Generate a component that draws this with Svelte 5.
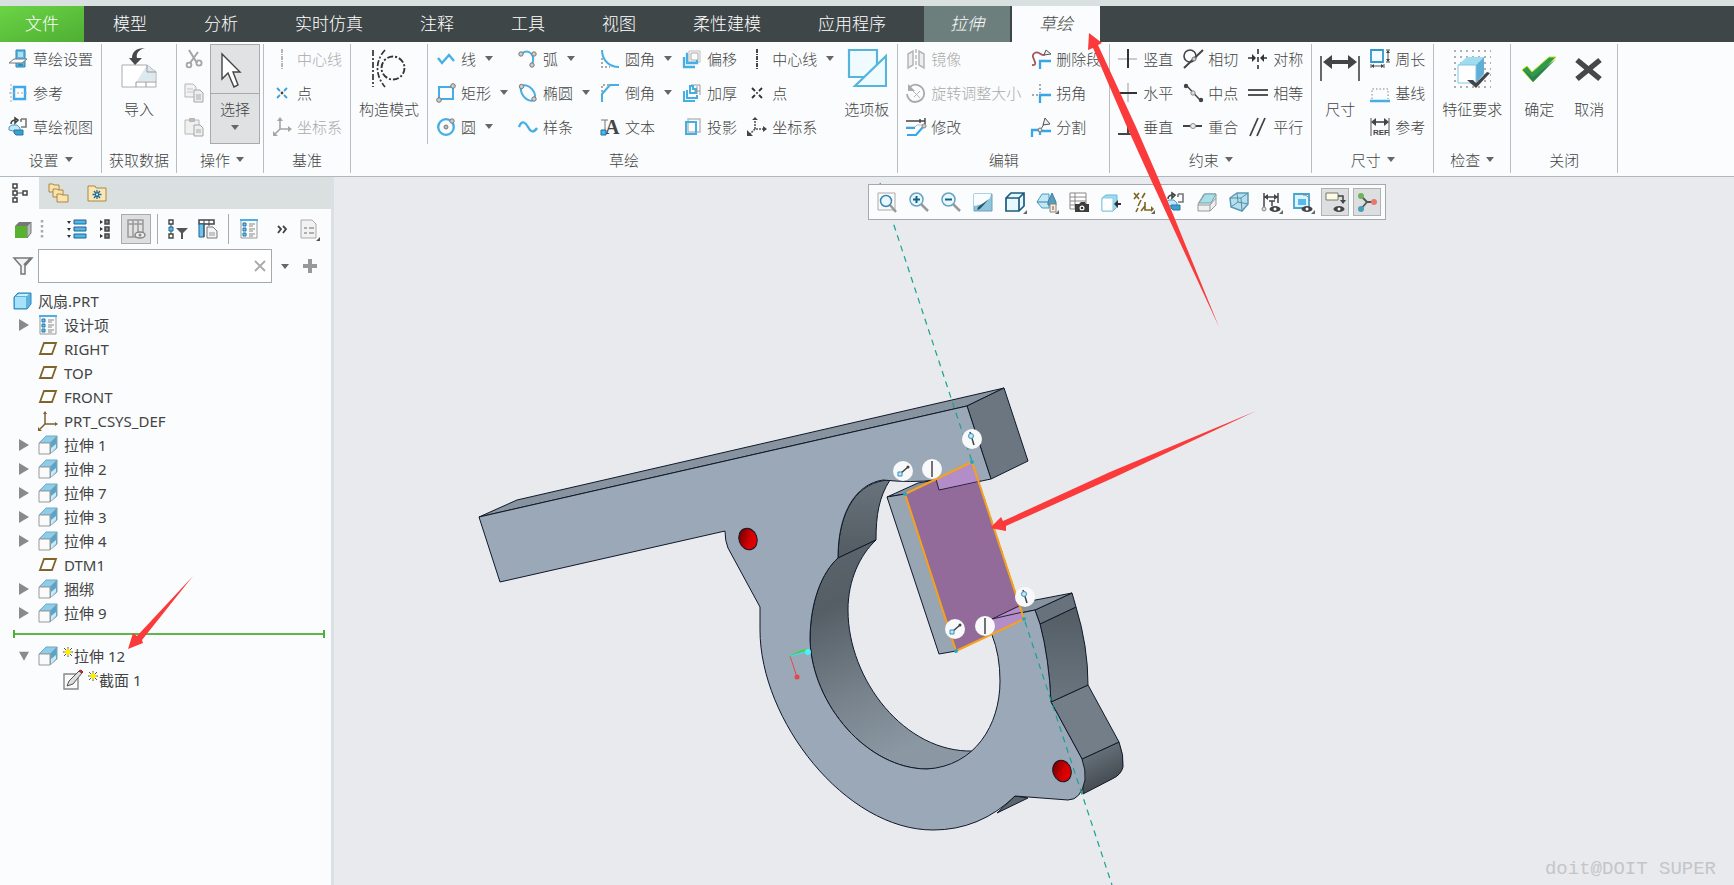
<script>
  let filterText = "";

  const tabs = [
    "模型",
    "分析",
    "实时仿真",
    "注释",
    "工具",
    "视图",
    "柔性建模",
    "应用程序",
  ];

  // inner svg markup, 20x20 unless drawn with bigIcon (40x40)
  const icons = {
    setup: `<path d="M8 1h9v17H8z" fill="#5fb6de" stroke="#2f83b0"/><path d="M10 3h5v5h-5z" fill="#a9e2f7"/><path d="M1 14l5-4h13l-5 4z" fill="#fff" stroke="#777"/><path d="M10 15h5v2h-5z" fill="#2c8fc4"/>`,
    refs: `<path d="M6 4h11v12H6z" fill="none" stroke="#3fa9ea" stroke-width="2.4"/><path d="M3 1v18M1 10h18" stroke="#aaa" stroke-dasharray="2 2" fill="none"/>`,
    view: `<path d="M3 7c0-3 2-4 5-4M7 1l3 2-3 3z" fill="none" stroke="#444" stroke-width="1.6"/><path d="M13 2h5v8h-5M13 2v3" fill="none" stroke="#777" stroke-width="1.6"/><path d="M1 10l3-2h5l3 3v3H5l-4-1z" fill="#bfe9fa" stroke="#4b9cc4"/><path d="M6 13h9v5H8l-2-2z" fill="#3b9fd0" stroke="#2579a5"/>`,
    import: `<path d="M3 17h25l9 7v15H3z" fill="#fff" stroke="#a9adb0"/><path d="M28 17l8 7v9H18z" fill="#dce9ef"/><path d="M28 17v7h9M17 39v-5h20M27 34v5" fill="none" stroke="#999"/><path d="M26 0C19 2 17 6 18 10h5l-7 7-6-7h3C13 4 17 0 26 0z" fill="#4a4a4a"/>`,
    cut: `<path d="M5 1l8 13M14 3L6 14" stroke="#a5a5a5" stroke-width="2" fill="none"/><circle cx="5" cy="16" r="2.4" fill="none" stroke="#a5a5a5" stroke-width="1.8"/><circle cx="15" cy="14" r="2.6" fill="none" stroke="#a5a5a5" stroke-width="1.8"/>`,
    copy: `<path d="M1 1h8l3 3v10H1z" fill="#f2f2f2" stroke="#b5b5b5"/><path d="M3 6h6M3 9h6" stroke="#c5c5c5"/><path d="M10 7h6l3 3v9h-9z" fill="#eee" stroke="#a5a5a5"/><path d="M12 12h5M12 14h5M12 16h5" stroke="#aaa"/>`,
    paste: `<path d="M1 3h14v14H1z" fill="#f0f0ee" stroke="#b8b8b8"/><path d="M5 1h6v4H5z" fill="#bbb"/><path d="M10 8h6l3 3v8h-9z" fill="#eee" stroke="#a5a5a5"/><path d="M12 13h5M12 15h5" stroke="#aaa"/>`,
    cursor: `<path d="M7 6v25l6-6 6 14 4-2-5-13h7z" fill="#fff" stroke="#444" stroke-width="1.4"/>`,
    axisOff: `<path d="M10 0v20" stroke="#b5b5b5" stroke-width="2" stroke-dasharray="4 1 1 1"/>`,
    pointBlue: `<path d="M5 5l3 3M15 5l-3 3M5 15l3-3M15 15l-3-3" stroke="#3fa0d8" stroke-width="1.8"/><circle cx="10" cy="10" r="1.4" fill="#444"/>`,
    csysOff: `<path d="M8 2v10h10M8 12l-6 6" stroke="#a5a5a5" stroke-width="1.6" fill="none"/><path d="M5 4l3-4 3 4zM16 9l4 3-4 3zM1 14v5h5z" fill="#a5a5a5"/>`,
    construct: `<path d="M4 2v37" stroke="#333" stroke-width="1.7" stroke-dasharray="6 2 2 2"/><path d="M16 2c-10 11-10 25 0 37" fill="none" stroke="#333" stroke-width="1.7" stroke-dasharray="6 2 2 2"/><circle cx="24" cy="20" r="11.500" fill="none" stroke="#333" stroke-width="1.9" stroke-dasharray="6 2 2 2"/>`,
    line: `<path d="M2 9l4 5 7-8 5 6" fill="none" stroke="#45aee4" stroke-width="2.3"/>`,
    rect: `<path d="M3 4h14v12H3z" fill="none" stroke="#45aee4" stroke-width="2"/><circle cx="17" cy="3" r="2.300" fill="#ccc" stroke="#777"/><circle cx="3" cy="17" r="2.300" fill="#ccc" stroke="#777"/>`,
    circle: `<circle cx="10" cy="10" r="7.800" fill="none" stroke="#45aee4" stroke-width="2.300"/><circle cx="10" cy="10" r="2" fill="#bbb" stroke="#777"/><circle cx="16" cy="4" r="2.200" fill="#ccc" stroke="#777"/>`,
    arc: `<path d="M3 5c7-6 15 0 11 11" fill="none" stroke="#45aee4" stroke-width="2"/><circle cx="3" cy="5" r="2.200" fill="#ccc" stroke="#777"/><circle cx="16" cy="5" r="2.200" fill="#ccc" stroke="#777"/><circle cx="14" cy="16" r="2.200" fill="#ccc" stroke="#777"/>`,
    ellipse: `<ellipse cx="10" cy="10" rx="9" ry="5.500" transform="rotate(50 10 10)" fill="none" stroke="#45aee4" stroke-width="2"/><circle cx="3.500" cy="3.500" r="2.200" fill="#ccc" stroke="#777"/><circle cx="16" cy="16" r="2.200" fill="#ccc" stroke="#777"/>`,
    spline: `<path d="M1 10c3-8 7-4 9 0s5 7 9 1" fill="none" stroke="#45aee4" stroke-width="2.300"/>`,
    fillet: `<path d="M2 1c0 10 7 17 17 17" fill="none" stroke="#45aee4" stroke-width="2"/><path d="M2 9v9h8" fill="none" stroke="#aaa" stroke-width="2" stroke-dasharray="2 2"/>`,
    chamfer: `<path d="M2 19v-8l8-9h9" fill="none" stroke="#45aee4" stroke-width="2"/><path d="M2 9V2h8" fill="none" stroke="#aaa" stroke-width="2" stroke-dasharray="2 2"/>`,
    text: `<path d="M1 3h7M5 3v10" stroke="#777" fill="none"/><text x="5" y="17" font-family="Liberation Serif, serif" font-weight="700" font-size="20" fill="#444">A</text><path d="M1 13h5v5H1z" fill="#49b8f0" stroke="#1a6ea0"/>`,
    offset: `<path d="M7 2h11v11H7z" fill="none" stroke="#bbb"/><path d="M9 4h7v7H9z" fill="none" stroke="#aaa"/><path d="M6 5H5v9h10v-3M2 8v10h11" fill="none" stroke="#45aee4" stroke-width="2.300"/>`,
    thicken: `<path d="M9 2h9v10" fill="none" stroke="#999"/><path d="M8 3h3v3h3v4H8zM5 7v8h10v-3M2 8v10h11" fill="none" stroke="#45aee4" stroke-width="2"/><path d="M15 3v8M12 8h6" stroke="#999"/>`,
    project: `<path d="M6 2h12v13H6z" fill="none" stroke="#bbb" stroke-width="1.500"/><path d="M4 5h10v12H4z" fill="none" stroke="#45aee4" stroke-width="2"/>`,
    axis: `<path d="M10 0v20" stroke="#333" stroke-width="1.800" stroke-dasharray="4 1 1 1"/>`,
    point: `<path d="M5 5l3 3M15 5l-3 3M5 15l3-3M15 15l-3-3" stroke="#333" stroke-width="1.800"/><circle cx="10" cy="10" r="1" fill="#333"/>`,
    csys: `<path d="M8 4v8h9M8 12l-5 5" stroke="#555" stroke-width="1.600" fill="none" stroke-dasharray="2 1"/><path d="M5 3l3-3 3 3zM16 9l4 3-4 3zM0 13v6h6z" fill="#444"/>`,
    palette: `<path d="M2 2h28v27H2z" fill="#f0fbff" stroke="#55b5dd" stroke-width="2.200"/><path d="M39 8v30H8z" fill="#f0fbff" stroke="#55b5dd" stroke-width="2.200"/>`,
    mirror: `<path d="M2 5l5-3v14l-5 3zM18 5l-5-3v14l5 3z" fill="#eee" stroke="#b5b5b5" stroke-width="1.500"/><path d="M10 0v20" stroke="#999" stroke-dasharray="4 2"/>`,
    rotate: `<path d="M4 4c5-5 13-1 14 5s-4 10-9 10-8-5-8-8" fill="none" stroke="#aaa" stroke-width="1.800"/><path d="M2 1v7h7z" fill="#aaa"/><path d="M7 8l7 7M14 8l-6 6" stroke="#b5b5b5"/>`,
    modify: `<path d="M0 4h19M19 1v6M14 2v4" stroke="#444" stroke-width="1.400" fill="none"/><path d="M0 10h9l2-2h7" stroke="#bbb" fill="none"/><path d="M0 11h9M1 18h9l7-8" stroke="#38a5e6" stroke-width="2" fill="none"/><circle cx="18" cy="9" r="2" fill="#ccc" stroke="#888"/>`,
    delseg: `<path d="M1 16c6 1 2-5 1-8s3-6 6-4 5 4 7-1" fill="none" stroke="#a5565d" stroke-width="1.800"/><path d="M15 1l5 4-7 1z" fill="#eee" stroke="#555"/><path d="M9 20v-8h11" fill="none" stroke="#38a5e6" stroke-width="2.300"/>`,
    corner: `<path d="M9 1v9M1 12h8" stroke="#aaa" stroke-width="2" stroke-dasharray="2 2"/><path d="M9 20v-8h11" fill="none" stroke="#38a5e6" stroke-width="2.300"/>`,
    divide: `<path d="M1 20v-7h7M9 18v-4h11" fill="none" stroke="#38a5e6" stroke-width="2.300"/><path d="M14 1l5 6-7 1zM13 7l-3 5" fill="#eee" stroke="#555"/><circle cx="9" cy="13" r="2" fill="#ddd" stroke="#777"/>`,
    vertical: `<path d="M0 10h19" stroke="#bbb" stroke-width="1.500"/><path d="M10 0v19" stroke="#333" stroke-width="2"/>`,
    horizontal: `<path d="M10 0v19" stroke="#bbb" stroke-width="1.500"/><path d="M0 10h19" stroke="#333" stroke-width="2"/>`,
    perp: `<path d="M10 1v16M0 17h20" stroke="#444" stroke-width="2"/>`,
    tangent: `<circle cx="7" cy="7" r="6" fill="none" stroke="#444" stroke-width="1.600"/><path d="M1 19L20 1" stroke="#444" stroke-width="2"/><circle cx="11" cy="10" r="2" fill="#ccc" stroke="#777"/>`,
    midpoint: `<path d="M3 2l15 16" stroke="#444" stroke-width="1.500"/><circle cx="3" cy="3" r="2.200" fill="#444"/><circle cx="18" cy="17" r="2.200" fill="#444"/><circle cx="10" cy="10" r="2.200" fill="#ddd" stroke="#888"/>`,
    coincident: `<path d="M0 9h19" stroke="#444" stroke-width="2"/><circle cx="10" cy="9" r="2.500" fill="#eee" stroke="#888"/>`,
    symmetric: `<path d="M10 0v20" stroke="#333" stroke-width="1.600" stroke-dasharray="5 3"/><path d="M0 9h6M19 9h-6" stroke="#333" stroke-width="1.600"/><path d="M4 5l4 4-4 4zM16 5l-4 4 4 4z" fill="#333"/>`,
    equal: `<path d="M0 7h20M0 12h20" stroke="#555" stroke-width="1.800"/>`,
    parallel: `<path d="M2 19L10 1M9 19l8-18" stroke="#444" stroke-width="1.800"/>`,
    dimension: `<path d="M1 8v25M39 8v25" stroke="#444" stroke-width="1.600"/><path d="M8 14h24" stroke="#444" stroke-width="4"/><path d="M3 14l9-7v14zM37 14l-9-7v14z" fill="#444"/>`,
    perimeter: `<path d="M1 1h12v12H1z" fill="#f4fbff" stroke="#3098cf" stroke-width="1.800"/><path d="M18 2v10M2 17h11M16 1h4M16 13h4M1 15v4M14 15v4" stroke="#555"/><path d="M16 4l2-3 2 3zM16 10l2 3 2-3zM4 15l-3 2 3 2zM11 15l3 2-3 2z" fill="#444"/>`,
    baseline: `<path d="M2 16V6h16v10" fill="none" stroke="#aaa" stroke-width="1.500" stroke-dasharray="1.500 2"/><path d="M0 18h20" stroke="#45aee4" stroke-width="2.500"/>`,
    dimref: `<path d="M1 1v18M19 1v18" stroke="#555"/><path d="M4 5h12" stroke="#444" stroke-width="1.600"/><path d="M1 5l5-4v8zM19 5l-5-4v8z" fill="#444"/><text x="3" y="18" font-family="Liberation Sans, sans-serif" font-weight="700" font-size="8" fill="#444">REF</text>`,
    feature: `<path d="M2 3h37M2 9h37M2 15h37M2 21h37M2 27h37M2 33h37M2 39h37" stroke="#b0b0b0" stroke-width="2" stroke-dasharray="2 4"/><path d="M6 17l9-8h17l-8 8z" fill="#9edcf0"/><path d="M24 17l8-8v17l-8 9z" fill="#5fb0d4"/><path d="M6 17h18v18H6z" fill="#fff" stroke="#7cc6e4"/><path d="M15 32h6l3 3 11-11 3 1-14 15z" fill="#444"/>`,
    ok: `<path d="M3 22l5-4 5 6L30 9h7L14 34z" fill="#2f9a4e" stroke="#c5e21b" stroke-width="1"/><path d="M5 23l9 11L37 11 14 29z" fill="#2a8250"/>`,
    cancel: `<path d="M8 12l23 19M31 12L8 31" stroke="#484848" stroke-width="5.500"/>`,
    tree: `<path d="M5 5v10M7 10h7" stroke="#444" fill="none"/><path d="M3 1h4v4H3zM3 8h4v4H3zM3 15h4v4H3zM13 8h4v4h-4z" fill="#fff" stroke="#444" stroke-width="1.500"/>`,
    folders: `<path d="M0 1h4l1 1h5v7H0z" fill="#fbe3ae" stroke="#a98848"/><path d="M4 6h4l1 1h5v7H4z" fill="#fbe3ae" stroke="#a98848"/><path d="M8 11h4l1 1h6v7H8z" fill="#fbe3ae" stroke="#a98848"/>`,
    favs: `<path d="M0 3h7l1 2h10v13H0z" fill="#fbe6b4" stroke="#a98848"/><path d="M9 7v9M4.500 11.500h9M6 8l6 7M12 8l-6 7" stroke="#1c6d9a" stroke-width="1.300"/><circle cx="9" cy="11.500" r="1" fill="#fff"/>`,
    cube: `<path d="M2 7l4-4h12l-4 4z" fill="#777"/><path d="M14 7l4-4v11l-4 5z" fill="#bbb" stroke="#777"/><path d="M2 7h12v12H2z" fill="#58b22f"/>`,
    grip: `<path d="M1 1v19" stroke="#aaa" stroke-width="2.500" stroke-dasharray="2.500 2.500"/>`,
    expand: `<path d="M7 1h12v4H7zM7 8h12v4H7zM7 15h12v4H7z" fill="#55b5e8" stroke="#1b6592"/><path d="M0 2h4l-2 3zM0 9h4l-2 3zM0 16h4l-2 3z" fill="#333"/>`,
    collapse: `<path d="M10 1h4v4h-4zM10 8h4v4h-4zM10 15h4v4h-4z" fill="#888" stroke="#444" stroke-width="1.500"/><path d="M5 1l3 2-3 2zM5 8l3 2-3 2zM5 15l3 2-3 2z" fill="#333"/>`,
    columnsOff: `<path d="M2 1h15v17H2zM7 1v17M12 1v12M2 5h15" fill="#e2e2e2" stroke="#999" stroke-width="1.500"/><ellipse cx="14" cy="16" rx="5" ry="3" fill="#eee" stroke="#888" stroke-width="1.500"/><circle cx="14" cy="16" r="1.500" fill="#888"/>`,
    treeFilter: `<path d="M3 5v10" stroke="#444"/><path d="M1 1h4v4H1zM1 15h4v4H1z" fill="#fff" stroke="#444" stroke-width="1.400"/><path d="M1 8h4v4H1z" fill="#5bbcf0" stroke="#1b6592"/><path d="M8 9h12l-5 5v6h-2v-6z" fill="#555"/>`,
    columns: `<path d="M1 1h15v4H1z" fill="#fff" stroke="#444" stroke-width="1.500"/><path d="M1 5h5v13H1z" fill="#6cc5f0" stroke="#1b6592"/><path d="M6 1v17M11 1v6" stroke="#444"/><path d="M9 8h6l4 4v7H9z" fill="#f4f4f4" stroke="#777"/><path d="M11 14h6M11 16h6" stroke="#999"/>`,
    items: `<path d="M2 1h16v18H2z" fill="#fafafa" stroke="#999"/><path d="M1 1h18" stroke="#4bb0e6" stroke-width="2"/><path d="M4 4h3v3H4zM4 9h3v3H4zM4 14h3v3H4z" fill="#6cc5f0" stroke="#1b78b0"/><path d="M10 5h6M10 7h4M10 10h6M10 12h4M10 15h6M10 17h4" stroke="#888"/>`,
    more: `<path d="M9 7l3 3-3 4M14 7l3 3-3 4" fill="none" stroke="#444" stroke-width="1.800"/>`,
    sheet: `<path d="M2 1h11l4 4v14H2z" fill="#f2f2f2" stroke="#aaa"/><path d="M5 9h3M10 9h5M5 14h3M10 14h5" stroke="#999" stroke-width="1.500"/><path d="M21 18v4h-4z" fill="#555"/>`,
    funnel: `<path d="M1 2h18l-7 8v8H8v-8z" fill="#f2f2f2" stroke="#777" stroke-width="1.500"/><path d="M11 9l7-7" stroke="#777" stroke-width="2"/>`,
    part: `<path d="M2 6l4-4h13v11l-4 5H2z" fill="#5db4e0" stroke="#2f86b4"/><path d="M3 6h11v11H3z" fill="#a6e3fa"/><path d="M4 5l3-2h10l-2 2z" fill="#c8f1fc"/>`,
    plane: `<path d="M6 4h12l-4 11H2z" fill="#fff" stroke="#80642c" stroke-width="1.800"/>`,
    csysDef: `<path d="M7 2v11h11M7 13l-5 5" fill="none" stroke="#7d602c" stroke-width="1.500"/><path d="M5 3l2-3 2 3zM17 11l3 2-3 2zM0 16v4h4z" fill="#7d602c"/>`,
    extrude: `<path d="M1 8l7-7h11v1l-6 6z" fill="#8dccea" stroke="#73a9c4"/><path d="M12 8l7-7v12l-7 6z" fill="#59a5ca" stroke="#8aa5b0"/><path d="M13 13l5-4v4l-5 5z" fill="#c9e9f4"/><path d="M1 8h11v11H1z" fill="#fafafa" stroke="#999"/>`,
    section: `<path d="M1 4h14v15H1z" fill="#fafafa" stroke="#888" stroke-width="1.400"/><path d="M4 16l2-5L16 1l3 2-9 11z" fill="#ddd" stroke="#555"/><path d="M16 1l2-1 2 2-1 1z" fill="#c33" stroke="#a22"/>`,
    refit: `<path d="M1 1h17v17H1z" fill="#fafafa" stroke="#aaa"/><path d="M13 13l6 7" stroke="#999" stroke-width="2.500"/><circle cx="9" cy="9" r="5.500" fill="#e8f8fd" stroke="#3a87ae" stroke-width="1.500"/>`,
    zoomIn: `<path d="M12 12l7 7" stroke="#999" stroke-width="2.500"/><circle cx="7.500" cy="7.500" r="6.500" fill="#e8f8fd" stroke="#68a3c0" stroke-width="1.500"/><path d="M4 7.500h7M7.500 4v7" stroke="#14608c" stroke-width="2"/>`,
    zoomOut: `<path d="M12 12l7 7" stroke="#999" stroke-width="2.500"/><circle cx="7.500" cy="7.500" r="6.500" fill="#e8f8fd" stroke="#68a3c0" stroke-width="1.500"/><path d="M4 7.500h7" stroke="#14608c" stroke-width="2"/>`,
    repaint: `<path d="M1 2h18v17H1z" fill="#8fc4dc" stroke="#6ba2bb"/><path d="M1 2h17c-1 8-8 10-17 12z" fill="#f8fdff"/><path d="M16 7l-9 10-3 1 1-3z" fill="#27566d"/>`,
    style: `<path d="M1 6l5-5h13v13l-5 5H1zM1 6h13v13M14 6l5-5" fill="#e8f8fd" stroke="#1b5c80" stroke-width="1.700"/><path d="M22 18v4h-4z" fill="#666"/>`,
    saved: `<path d="M0 10l5-8h7v14H5z" fill="#c2e8f5" stroke="#4b9cb9"/><path d="M0 10h11M11 10l4-9 4 9v3h-8z" fill="#5b9cbd" stroke="#3c81a2"/><path d="M13 12h6v8h-6z" fill="#f4f0e8" stroke="#8a8172"/><path d="M15 15h2M15 17h2" stroke="#843"/><path d="M22 18v4h-4z" fill="#666"/>`,
    viewMgr: `<path d="M1 1h16v16H1zM1 5h16M1 9h16M1 13h8M6 1v16" fill="#fff" stroke="#888"/><path d="M6 12h4l2-2h4l1 2h3v8H6z" fill="#3c3c3c"/><circle cx="13" cy="16" r="2.500" fill="#fff"/><circle cx="13" cy="16" r="1.300" fill="#333"/>`,
    activate: `<path d="M1 6l4-3h11v12l-4 4H1z" fill="#9adcf4" stroke="#6cb7d5"/><path d="M1 6h11v13H1z" fill="#fff" stroke="#8ccbe4"/><path d="M15 12h5" stroke="#333" stroke-width="2"/><path d="M13 12l4-4v8z" fill="#333"/>`,
    datums: `<path d="M1 1l5 6M6 1L1 7M12 1L9 6M8 8l-3 6M12 10v8h7M12 14l-4 5M5 16l-2 4" stroke="#7d6420" stroke-width="1.600" fill="none"/><path d="M18 14l3 3-3 3z" fill="#7d6420"/><path d="M22 18v4h-4z" fill="#666"/>`,
    clip: `<path d="M1 12l6-10h12v11l-6 6H1z" fill="#eef1f1" stroke="#999"/><path d="M2 11l6-9h11l-5 9z" fill="#a9dfe9" stroke="#6fa3ae"/><path d="M1 13h12v6M13 13l6-7" fill="none" stroke="#999"/>`,
    shade: `<path d="M1 6l7-5h11v11l-6 7L2 15z" fill="#b4dfee" stroke="#5b9bb5" stroke-width="1.500"/><path d="M1 6h11l7-5M12 6l1 13M8 1l1 9-7 5M9 10l10 2" fill="none" stroke="#5b8ea5"/>`,
    dimEye: `<path d="M3 1v14M17 1v10M3 5h14M8 9h6M11 9v5" stroke="#444" stroke-width="1.500"/><path d="M3 5l4-3v6zM17 5l-4-3v6z" fill="#444"/><circle cx="3" cy="17" r="2" fill="#ddd" stroke="#888"/><ellipse cx="14" cy="17" rx="5.500" ry="3" fill="#444"/><circle cx="14" cy="17" r="1.500" fill="#fff"/><path d="M22 18v4h-4z" fill="#666"/>`,
    refEye: `<path d="M1 2h15v14H1z" fill="#def4fc" stroke="#45a5d3" stroke-width="1.800"/><path d="M5 7h8v6H5z" fill="#55b9ec"/><path d="M10 3c4 0 6 2 7 6" fill="none" stroke="#888"/><ellipse cx="14" cy="17" rx="5.500" ry="3" fill="#444"/><circle cx="14" cy="17" r="1.500" fill="#fff"/><path d="M22 18v4h-4z" fill="#666"/>`,
    tagEye: `<path d="M1 1h12v7H1z" fill="#fffbe2" stroke="#777"/><path d="M13 4h5v6" fill="none" stroke="#444" stroke-width="1.500"/><path d="M15 8h6l-3 4z" fill="#444"/><ellipse cx="14" cy="17" rx="5.500" ry="3" fill="#444"/><circle cx="14" cy="17" r="1.500" fill="#fff"/>`,
    spin: `<path d="M4 4l6 6h7M10 10l-6 7" fill="none" stroke="#555" stroke-width="1.800"/><circle cx="4" cy="4" r="3" fill="#6bb457"/><circle cx="17" cy="10" r="3" fill="#e8776d"/><circle cx="4" cy="17" r="3" fill="#4c9cb8"/>`,
  };

  const setupCmds = [
    { icon: "setup", label: "草绘设置" },
    { icon: "refs", label: "参考" },
    { icon: "view", label: "草绘视图" },
  ];

  const datumCmds = [
    { icon: "axisOff", label: "中心线", off: true },
    { icon: "pointBlue", label: "点" },
    { icon: "csysOff", label: "坐标系", off: true },
  ];

  const sketchCols = [
    [
      { icon: "line", label: "线", menu: true },
      { icon: "rect", label: "矩形", menu: true },
      { icon: "circle", label: "圆", menu: true },
    ],
    [
      { icon: "arc", label: "弧", menu: true },
      { icon: "ellipse", label: "椭圆", menu: true },
      { icon: "spline", label: "样条" },
    ],
    [
      { icon: "fillet", label: "圆角", menu: true },
      { icon: "chamfer", label: "倒角", menu: true },
      { icon: "text", label: "文本" },
    ],
    [
      { icon: "offset", label: "偏移" },
      { icon: "thicken", label: "加厚" },
      { icon: "project", label: "投影" },
    ],
    [
      { icon: "axis", label: "中心线", menu: true },
      { icon: "point", label: "点" },
      { icon: "csys", label: "坐标系" },
    ],
  ];

  const editCols = [
    [
      { icon: "mirror", label: "镜像", off: true },
      { icon: "rotate", label: "旋转调整大小", off: true },
      { icon: "modify", label: "修改" },
    ],
    [
      { icon: "delseg", label: "删除段" },
      { icon: "corner", label: "拐角" },
      { icon: "divide", label: "分割" },
    ],
  ];

  const constrainCols = [
    [
      { icon: "vertical", label: "竖直" },
      { icon: "horizontal", label: "水平" },
      { icon: "perp", label: "垂直" },
    ],
    [
      { icon: "tangent", label: "相切" },
      { icon: "midpoint", label: "中点" },
      { icon: "coincident", label: "重合" },
    ],
    [
      { icon: "symmetric", label: "对称" },
      { icon: "equal", label: "相等" },
      { icon: "parallel", label: "平行" },
    ],
  ];

  const dimCmds = [
    { icon: "perimeter", label: "周长" },
    { icon: "baseline", label: "基线" },
    { icon: "dimref", label: "参考" },
  ];

  const treeTop = [
    { icon: "items", label: "设计项", branch: true },
    { icon: "plane", label: "RIGHT" },
    { icon: "plane", label: "TOP" },
    { icon: "plane", label: "FRONT" },
    { icon: "csysDef", label: "PRT_CSYS_DEF" },
    { icon: "extrude", label: "拉伸 1", branch: true },
    { icon: "extrude", label: "拉伸 2", branch: true },
    { icon: "extrude", label: "拉伸 7", branch: true },
    { icon: "extrude", label: "拉伸 3", branch: true },
    { icon: "extrude", label: "拉伸 4", branch: true },
    { icon: "plane", label: "DTM1" },
    { icon: "extrude", label: "捆绑", branch: true },
    { icon: "extrude", label: "拉伸 9", branch: true },
  ];

  const viewTools = [
    { icon: "refit", title: "重新调整" },
    { icon: "zoomIn", title: "放大" },
    { icon: "zoomOut", title: "缩小" },
    { icon: "repaint", title: "重画" },
    { icon: "style", title: "显示样式" },
    { icon: "saved", title: "已保存方向" },
    { icon: "viewMgr", title: "视图管理器" },
    { icon: "activate", title: "激活" },
    { icon: "datums", title: "基准显示过滤器" },
    { icon: "view", title: "草绘视图" },
    { icon: "clip", title: "修剪模型" },
    { icon: "shade", title: "着色" },
    { icon: "dimEye", title: "草绘器显示过滤器" },
    { icon: "refEye", title: "参考显示" },
    { icon: "tagEye", title: "注释显示", on: true },
    { icon: "spin", title: "旋转中心", on: true },
  ];

  // constraint badges on the sketch
  const badges = [
    { x: 903, y: 471, kind: "mid" },
    { x: 932, y: 469, kind: "vert" },
    { x: 972, y: 439, kind: "on" },
    { x: 1025, y: 597, kind: "on" },
    { x: 955, y: 629, kind: "mid" },
    { x: 985, y: 626, kind: "vert" },
  ];
</script>

{#snippet icon(name)}
  <svg class="icon" viewBox="0 0 20 20" aria-hidden="true">{@html icons[name]}</svg>
{/snippet}

{#snippet bigIcon(name)}
  <svg class="big-icon" viewBox="0 0 40 40" aria-hidden="true">{@html icons[name]}</svg>
{/snippet}

{#snippet star()}
  <svg class="star" viewBox="0 0 10 10" aria-hidden="true">
    <path d="M5 0v10M0 5h10M1 1l8 8M9 1L1 9" stroke="#555" />
    <circle cx="5" cy="5" r="2.500" fill="#fdf000" />
    <path d="M5 1v8M1 5h8" stroke="#fdf000" />
  </svg>
{/snippet}

{#snippet column(cmds)}
  <div class="column">
    {#each cmds as cmd}
      <button class="cmd" disabled={cmd.off}>
        {@render icon(cmd.icon)}
        <span>{cmd.label}</span>
        {#if cmd.menu}<i class="caret"></i>{/if}
      </button>
    {/each}
  </div>
{/snippet}

{#snippet big(name, label)}
  <button class="big">
    {@render bigIcon(name)}
    <span>{label}</span>
  </button>
{/snippet}

<div class="app">
  <div class="titlebar"></div>

  <nav class="tabs">
    <button class="tab file">文件</button>
    {#each tabs as tab}
      <button class="tab">{tab}</button>
    {/each}
    <button class="tab context">拉伸</button>
    <button class="tab context active">草绘</button>
  </nav>

  <header class="ribbon">
    <section class="group">
      <div class="body">{@render column(setupCmds)}</div>
      <button class="group-label">设置<i class="caret"></i></button>
    </section>

    <section class="group tight">
      <div class="body">{@render big("import", "导入")}</div>
      <div class="group-label">获取数据</div>
    </section>

    <section class="group ops">
      <div class="body">
        <div class="column">
          <button class="cmd" aria-label="剪切">{@render icon("cut")}</button>
          <button class="cmd" aria-label="复制">{@render icon("copy")}</button>
          <button class="cmd" aria-label="粘贴">{@render icon("paste")}</button>
        </div>
        <button class="big select">
          {@render bigIcon("cursor")}
          <span>选择</span>
          <i class="caret"></i>
        </button>
      </div>
      <button class="group-label">操作<i class="caret"></i></button>
    </section>

    <section class="group">
      <div class="body">{@render column(datumCmds)}</div>
      <div class="group-label">基准</div>
    </section>

    <section class="group">
      <div class="body">
        {@render big("construct", "构造模式")}
        <div class="divider"></div>
        {#each sketchCols as col}
          {@render column(col)}
        {/each}
        {@render big("palette", "选项板")}
      </div>
      <div class="group-label">草绘</div>
    </section>

    <section class="group">
      <div class="body">
        {#each editCols as col}
          {@render column(col)}
        {/each}
      </div>
      <div class="group-label">编辑</div>
    </section>

    <section class="group">
      <div class="body">
        {#each constrainCols as col}
          {@render column(col)}
        {/each}
      </div>
      <button class="group-label">约束<i class="caret"></i></button>
    </section>

    <section class="group">
      <div class="body">
        {@render big("dimension", "尺寸")}
        {@render column(dimCmds)}
      </div>
      <button class="group-label">尺寸<i class="caret"></i></button>
    </section>

    <section class="group">
      <div class="body">{@render big("feature", "特征要求")}</div>
      <button class="group-label">检查<i class="caret"></i></button>
    </section>

    <section class="group">
      <div class="body">
        {@render big("ok", "确定")}
        {@render big("cancel", "取消")}
      </div>
      <div class="group-label">关闭</div>
    </section>
  </header>

  <div class="work">
    <aside class="sidebar">
      <div class="panel-tabs">
        <button class="current" aria-label="模型树">{@render icon("tree")}</button>
        <button aria-label="文件夹浏览器">{@render icon("folders")}</button>
        <button aria-label="收藏夹">{@render icon("favs")}</button>
      </div>

      <div class="tree-tools">
        <div class="tools">
          <button aria-label="模型">{@render icon("cube")}</button>
          <span class="grip">{@render icon("grip")}</span>
          <button aria-label="全部展开">{@render icon("expand")}</button>
          <button aria-label="全部折叠">{@render icon("collapse")}</button>
          <button class="pressed" aria-label="显示列">{@render icon("columnsOff")}</button>
        </div>
        <div class="tools wide">
          <span class="bar"></span>
          <button aria-label="树过滤器">{@render icon("treeFilter")}</button>
          <button aria-label="树列">{@render icon("columns")}</button>
          <span class="bar"></span>
          <button aria-label="设计项">{@render icon("items")}</button>
          <button aria-label="更多">{@render icon("more")}</button>
          <button aria-label="设置">{@render icon("sheet")}</button>
        </div>
      </div>

      <div class="search">
        {@render icon("funnel")}
        <div class="search-box">
          <input type="text" aria-label="过滤" bind:value={filterText} />
          <button aria-label="清除" on:click={() => (filterText = "")}>
            <svg viewBox="0 0 12 12"><path d="M1 1l10 10M11 1L1 11" stroke="#aaa" stroke-width="1.800" /></svg>
          </button>
        </div>
        <button class="drop" aria-label="选项"><i class="caret"></i></button>
        <button class="add" aria-label="添加">
          <svg viewBox="0 0 14 14"><path d="M7 0v14M0 7h14" stroke="#999" stroke-width="4" /></svg>
        </button>
      </div>

      <ul class="tree">
        <li class="root">{@render icon("part")}<span>风扇.PRT</span></li>
        {#each treeTop as node}
          <li>
            <i class="twisty" class:branch={node.branch}></i>
            {@render icon(node.icon)}
            <span>{node.label}</span>
          </li>
        {/each}
      </ul>
      <div class="insert-here"></div>
      <ul class="tree">
        <li>
          <i class="twisty open"></i>
          {@render icon("extrude")}
          {@render star()}
          <span>拉伸 12</span>
        </li>
        <li class="child">
          <i class="twisty"></i>
          {@render icon("section")}
          {@render star()}
          <span>截面 1</span>
        </li>
      </ul>
    </aside>

    <main class="canvas">
      <svg class="model" viewBox="334 177 1400 708">
        <defs>
          <linearGradient id="bore" x1="0" y1="0" x2="0.300" y2="1">
            <stop offset="0" stop-color="#5d666e" />
            <stop offset="0.300" stop-color="#555e65" />
            <stop offset="0.700" stop-color="#77828c" />
            <stop offset="1" stop-color="#8b97a2" />
          </linearGradient>
          <linearGradient id="lobe" x1="0" y1="0" x2="0" y2="1">
            <stop offset="0" stop-color="#68737c" />
            <stop offset="1" stop-color="#535b61" />
          </linearGradient>
          <linearGradient id="prong" x1="0" y1="0" x2="0" y2="1">
            <stop offset="0" stop-color="#535c63" />
            <stop offset="1" stop-color="#6b7680" />
          </linearGradient>
          <linearGradient id="ear" x1="0" y1="0" x2="0.400" y2="1">
            <stop offset="0" stop-color="#737f8a" />
            <stop offset="1" stop-color="#3f464b" />
          </linearGradient>
          <linearGradient id="hole" x1="0" y1="0" x2="1" y2="1">
            <stop offset="0" stop-color="#5c0000" />
            <stop offset="0.600" stop-color="#d80000" />
            <stop offset="1" stop-color="#e00" />
          </linearGradient>
        </defs>

        <g stroke="#10192a" stroke-width="1" stroke-linejoin="round">
          <path d="M479 517L517 500L1004 388L967 406Z" fill="#87939e" />
          <path d="M1004 388L1028 461L991 479L967 406Z" fill="#6c7681" />
          <path d="M1015 796L1028 798L997 813Z" fill="#5c656c" />
          <path d="M1082 759L1119 742Q1124 755 1123 767Q1121 775 1112 779L1083 794Z" fill="url(#ear)" />
          <path d="M1051 702L1088 685L1119 742L1082 759Z" fill="#737e89" />
          <path d="M1040 624L1076 607Q1088 646 1088 685L1051 702Q1049 660 1040 624Z" fill="url(#prong)" />
          <path d="M1035 610L1072 593L1076 607L1040 624Z" fill="#68727c" />
          <path d="M992 619L1025 602L1072 593L1035 610Z" fill="#87939e" />
          <!-- bore walls -->
          <path d="M890 480C858 481 838 510 838 558L876 540C876 515 879 497 890 480Z" fill="url(#lobe)" />
          <path d="M838 558C822 572 810 602 810 640C812 705 868 769 927 769C946 769 962 763 973 751C905 753 848 680 848 610C848 580 860 555 876 540Z" fill="url(#bore)" />
          <!-- front face -->
          <path
            d="M479 517L967 406L991 479L939 490L936 480Q912 483 883 480C856 484 838 512 838 558C822 572 810 602 810 640C812 705 868 769 927 769C975 766 1000 725 1000 681Q1000 655 992 635L985 624L992 619L1035 610L1040 624Q1049 658 1051 702L1082 759Q1086 770 1085 780Q1081 800 1068 800L1015 796Q980 830 933 830C845 830 760 720 760 630L760 607L728 548Q725 541 725 531L500 582Z"
            fill="#9ba8b7"
          />
          <path d="M887 497L918 483L936 480L905 494Z" fill="#87939e" />
          <path d="M887 497L905 494L956 651L939 654Z" fill="#98a5b2" />
          <ellipse cx="748" cy="539" rx="9" ry="11" transform="rotate(-20 748 539)" fill="url(#hole)" />
          <ellipse cx="1062" cy="771" rx="9" ry="11" transform="rotate(-20 1062 771)" fill="url(#hole)" />
        </g>

        <path d="M880 183L1112 885" stroke="#18a391" stroke-width="1.200" stroke-dasharray="6 5" />

        <!-- sketch section -->
        <path d="M905 494L972 462L1024 619L956 651Z" fill="#936b9a" />
        <path d="M936 479L972 462L981 482L939 490Z" fill="#b28dc8" />
        <path d="M992 619L1021 606L1024 619L988 636Z" fill="#b28dc8" />
        <path d="M936 479L939 490L981 481M992 619L1021 605M992 619L1023 612" stroke="#2b2138" fill="none" />
        <path d="M905 494L972 462L1024 619L956 651Z" fill="none" stroke="#f7a21b" stroke-width="2" />
        <g fill="#25a7c4">
          <circle cx="905" cy="494" r="2" />
          <circle cx="972" cy="462" r="2" />
          <circle cx="1024" cy="619" r="2" />
          <circle cx="956" cy="651" r="2" />
        </g>

        {#each badges as badge}
          <g transform="translate({badge.x} {badge.y})">
            <circle r="10" fill="#f7f9fb" />
            {#if badge.kind === "vert"}
              <path d="M0 -8V8" stroke="#444" stroke-width="1.500" />
            {:else if badge.kind === "mid"}
              <path d="M-3 3L5 -4" stroke="#444" stroke-width="1.500" />
              <circle cx="5" cy="-4" r="1.500" fill="#444" />
              <path d="M-5 1h4v4h-4z" fill="#bfe8f8" stroke="#3b8fb8" />
            {:else}
              <path d="M-2 -7L2 6" stroke="#444" stroke-width="1.500" />
              <circle cx="-1" cy="-3" r="2.500" fill="#bfe8f8" stroke="#3b8fb8" />
            {/if}
          </g>
        {/each}

        <path d="M790 656L797 677" stroke="#e8474a" />
        <circle cx="797" cy="677" r="2.500" fill="#e8474a" />
        <path d="M790 656L804 650" stroke="#38d84a" stroke-width="1.500" />
        <path d="M802 652l3-4 4 3z" fill="#38e04a" />
        <path d="M790 656L807 652" stroke="#4df" />
        <circle cx="808" cy="652" r="3" fill="#4ef0ff" />
      </svg>

      <div class="view-tools">
        {#each viewTools as tool}
          <button class:on={tool.on} title={tool.title} aria-label={tool.title}>
            {@render icon(tool.icon)}
          </button>
        {/each}
      </div>

      <div class="watermark">doit@DOIT SUPER</div>
    </main>
  </div>

  <svg class="pointers" viewBox="0 0 1734 885" aria-hidden="true">
    <g fill="#fb3b3b">
      <path d="M1089 33L1102 43L1098 45L1136 127L1159 180L1219 327L1151 180L1127 127L1093 48L1088 50Z" />
      <path d="M990 528L1001 517L1003 521L1110 472L1256 411L1113 478L1006 526L1006 531Z" />
      <path d="M128 649L133 633L137 636L193 576L142 640L143 643Z" />
    </g>
  </svg>
</div>

<style>
  :global(body) {
    margin: 0;
    overflow: hidden;
  }

  .app {
    position: relative;
    display: flex;
    flex-direction: column;
    height: 100vh;
    overflow: hidden;
    background: #fafcfd;
    color: #444;
    font-family: "Noto Sans", "Noto Sans CJK SC", sans-serif;
    font-size: 15px;
    font-weight: 300;
    line-height: 20px;
  }

  button {
    margin: 0;
    padding: 0;
    border: none;
    background: none;
    color: inherit;
    font: inherit;
    white-space: nowrap;
  }

  .icon {
    flex: none;
    width: 20px;
    height: 20px;
    overflow: visible;
  }

  .big-icon {
    width: 40px;
    height: 40px;
  }

  .caret {
    display: inline-block;
    border: 4px solid transparent;
    border-top: 5px solid #666;
    border-bottom: none;
  }

  .titlebar {
    flex: none;
    height: 6px;
    background: #d9e1e0;
  }

  /* tabs */
  .tabs {
    flex: none;
    display: flex;
    height: 36px;
    background: #3f4648;
    color: #fff;
    font-size: 17px;
  }

  .tab {
    padding: 0 28px 0 29px;
  }

  .tab.file {
    padding: 0 25px;
    background: linear-gradient(160deg, #6ad446, #4fae32);
  }

  .tab.context {
    margin-left: 10px;
    padding: 0 26px;
    background: #6d7f7d;
    font-style: italic;
  }

  .tab.active {
    margin-left: 2px;
    padding: 0 27px;
    background: #fafcfd;
    color: #444;
  }

  /* ribbon */
  .ribbon {
    flex: none;
    display: flex;
    border-bottom: 1px solid #b0b8bf;
  }

  .group {
    flex: none;
    display: flex;
    flex-direction: column;
    padding: 0 8px;
    margin: 2px 0 3px;
    border-right: 1px solid #b9bdc0;
  }

  .group.tight {
    padding: 0 7px;
  }

  .group.ops {
    padding: 0 3px 0 7px;
  }

  .body {
    display: flex;
    gap: 10px;
    height: 100px;
  }

  .ops .body {
    gap: 6px;
  }

  .tight .body {
    justify-content: center;
  }

  .group-label {
    display: flex;
    align-items: center;
    justify-content: center;
    height: 29px;
    padding-top: 2px;
    box-sizing: border-box;
  }

  .group-label .caret {
    margin-left: 6px;
  }

  .column {
    display: flex;
    flex-direction: column;
    justify-content: space-between;
    margin: -2px 0 1px;
  }

  .cmd {
    display: flex;
    align-items: center;
    gap: 5px;
    height: 33px;
  }

  .cmd:disabled {
    color: #aaa;
  }

  .cmd .caret {
    margin-left: 4px;
  }

  .big {
    display: flex;
    flex-direction: column;
    align-items: center;
    min-width: 40px;
    padding-top: 4px;
  }

  .big span {
    margin-top: 11px;
  }

  .select {
    width: 50px;
    padding-top: 3px;
    border: 1px solid #aaa;
    background: linear-gradient(#e0e2e3 48px, #aaa 48px, #aaa 49px, #dfe1e2 49px);
    box-sizing: border-box;
  }

  .select .caret {
    margin-top: 6px;
  }

  .divider {
    width: 1px;
    margin: 0 -2px;
    background: #b9bdc0;
  }

  /* sidebar */
  .work {
    flex: 1;
    display: flex;
    min-height: 0;
  }

  .sidebar {
    flex: none;
    width: 331px;
    border-right: 3px solid #dbe0e2;
  }

  .panel-tabs {
    display: flex;
    height: 32px;
    background: #d9e0df;
  }

  .panel-tabs button {
    display: flex;
    align-items: center;
    justify-content: center;
    width: 39px;
  }

  .panel-tabs .current {
    background: #fafcfd;
  }

  .tree-tools {
    display: flex;
    align-items: center;
    height: 40px;
    padding-left: 13px;
  }

  .tools {
    display: flex;
    align-items: center;
    gap: 8px;
  }

  .tools.wide {
    gap: 10px;
    margin-left: 6px;
  }

  .tools button {
    display: flex;
  }

  .grip {
    display: flex;
    width: 18px;
  }

  .bar {
    width: 1px;
    height: 30px;
    background: #aaa;
  }

  .tools .pressed {
    margin-left: -2px;
    padding: 4px;
    border: 1px solid #aaa;
    background: #dcdedf;
  }

  .search {
    display: flex;
    align-items: center;
    padding: 0 9px 0 13px;
  }

  .search-box {
    flex: 1;
    display: flex;
    align-items: center;
    min-width: 0;
    height: 32px;
    margin-left: 5px;
    border: 1px solid #a5a9ab;
    background: #fff;
  }

  .search-box input {
    flex: 1;
    min-width: 0;
    padding: 0 6px;
    border: none;
    outline: none;
    background: none;
    font: inherit;
  }

  .search-box button {
    display: flex;
    padding: 0 5px;
  }

  .search-box svg {
    width: 12px;
    height: 12px;
  }

  .drop,
  .add {
    flex: none;
    display: flex;
    align-items: center;
    justify-content: center;
    width: 25px;
  }

  .add svg {
    width: 14px;
    height: 14px;
  }

  .tree {
    margin: 6px 0 0;
    padding: 0;
    list-style: none;
    font-weight: 400;
  }

  .tree li {
    display: flex;
    align-items: center;
    height: 24px;
    padding-left: 19px;
  }

  .tree li.root {
    padding-left: 12px;
  }

  .tree li.child {
    padding-left: 44px;
  }

  .tree span {
    margin-left: 6px;
  }

  .tree .star + span {
    margin-left: 1px;
  }

  .twisty {
    width: 10px;
    height: 12px;
    margin-right: 9px;
  }

  .twisty.branch {
    background: #8a8a8a;
    clip-path: polygon(0 0, 100% 50%, 0 100%);
  }

  .twisty.open {
    background: #8a8a8a;
    clip-path: polygon(0 15%, 100% 15%, 50% 90%);
  }

  .star {
    width: 10px;
    height: 10px;
    margin: -8px 0 0 5px;
  }

  .insert-here {
    height: 2px;
    margin: 5px 6px 4px 13px;
    border: solid #4fae3c;
    border-width: 0 2px;
    padding: 3px 0;
    background: #5cb84a content-box;
  }

  /* graphics window */
  .canvas {
    position: relative;
    flex: 1;
    display: flex;
    min-width: 0;
    background: #e8eaee;
  }

  .model {
    flex: 1;
    min-width: 0;
  }

  .view-tools {
    position: absolute;
    top: 7px;
    left: 534px;
    display: flex;
    gap: 4px;
    padding: 3px 4px;
    border: 1px solid #a5a9ab;
    background: #fafcfd;
  }

  .view-tools button {
    display: flex;
    padding: 3px;
    border: 1px solid transparent;
  }

  .view-tools .on {
    border-color: #b0b3b5;
    background: #dcdee0;
  }

  .watermark {
    position: absolute;
    right: 18px;
    bottom: 6px;
    color: #c3c6c9;
    font-family: "Liberation Mono", monospace;
    font-size: 19px;
  }

  .pointers {
    position: absolute;
    inset: 0;
    width: 100%;
    height: 100%;
    pointer-events: none;
  }
</style>
